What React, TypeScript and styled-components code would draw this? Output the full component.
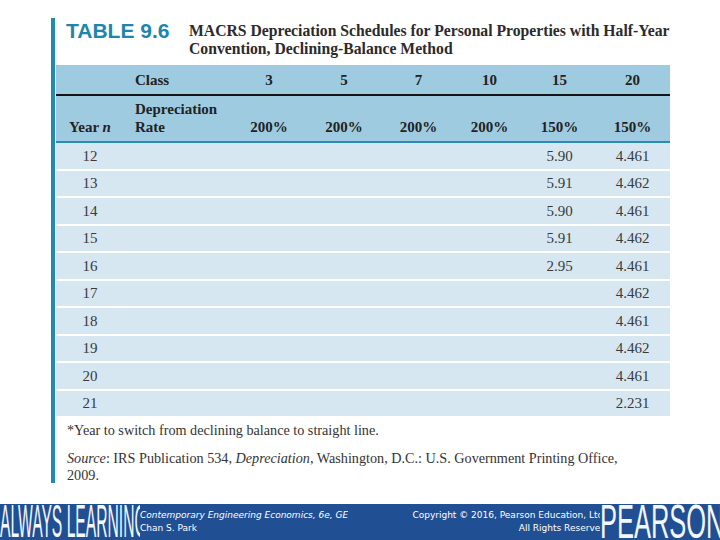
import React from 'react'
import styled, { createGlobalStyle } from 'styled-components'

const GlobalStyle = createGlobalStyle`
  html, body {
    margin: 0;
    padding: 0;
    background: #ffffff;
  }
`

const Page = styled.div`
  width: 720px;
  height: 540px;
  display: flex;
  flex-direction: column;
  overflow: hidden;
  background: #fff;
`

const Slide = styled.div`
  display: flex;
  flex-direction: row;
  padding: 18px 0 0 51px;
`

const Bar = styled.div`
  width: 4px;
  height: 465px;
  background: #2389ae;
  flex-shrink: 0;
  margin-right: 1px;
`

const Content = styled.div`
  width: 614px;
  display: flex;
  flex-direction: column;
`

const TitleRow = styled.div`
  display: flex;
  flex-direction: row;
  height: 47px;
  padding: 3px 0 0 10px;
  box-sizing: border-box;
`

const TableLabel = styled.div`
  font-family: 'Liberation Sans', Arial, sans-serif;
  font-weight: bold;
  font-size: 21px;
  line-height: 20px;
  color: #1c86ad;
  width: 123px;
  flex-shrink: 0;
`

const Caption = styled.div`
  font-family: 'Liberation Serif', 'Times New Roman', serif;
  font-weight: bold;
  font-size: 15.7px;
  line-height: 18px;
  color: #2b2b2b;
  margin-top: 1px;
  white-space: nowrap;
`

const Table = styled.table`
  border-collapse: collapse;
  width: 614px;
  table-layout: fixed;
  font-family: 'Liberation Serif', 'Times New Roman', serif;
  font-size: 15px;
  color: #3a3a3a;
`

const HeadRow = styled.tr<{ $tall?: boolean }>`
  background: #9ecbe0;
  border-bottom: 2px solid ${(p) => (p.$tall ? '#2a8cb4' : '#141414')};
`

const Th = styled.th<{ $left?: boolean }>`
  font-weight: bold;
  color: #222;
  height: 29px;
  padding: 0 0 0 ${(p) => (p.$left ? '11px' : '0')};
  text-align: ${(p) => (p.$left ? 'left' : 'center')};
  vertical-align: middle;
  line-height: 18px;
`

const ThLow = styled(Th)`
  height: 40px;
  vertical-align: bottom;
  padding-bottom: 5px;
`

const BodyRow = styled.tr`
  background: #d6e7f1;
  border-top: 2px solid #ffffff;
  &:first-child {
    border-top: none;
  }
`

const Td = styled.td`
  height: 25.5px;
  text-align: center;
  padding: 0;
  vertical-align: middle;
  line-height: 18px;
`

const Notes = styled.div`
  font-family: 'Liberation Serif', 'Times New Roman', serif;
  font-size: 14.2px;
  color: #333;
  padding: 6px 0 0 11px;
  line-height: 17px;
`

const Note = styled.p<{ $gap?: boolean }>`
  margin: ${(p) => (p.$gap ? '11px' : '0')} 0 0 0;
  max-width: 560px;
`

const Footer = styled.div`
  margin-top: auto;
  height: 36px;
  background: #204f94;
  display: flex;
  flex-direction: row;
  align-items: stretch;
  color: #fff;
  overflow: hidden;
`

const Logo = styled.div<{ $w: number }>`
  width: ${(p) => p.$w}px;
  flex-shrink: 0;
  overflow: hidden;
`

const LogoText = styled.span<{ $size: number; $scale: number }>`
  display: block;
  font-family: 'Liberation Sans', Arial, sans-serif;
  font-size: ${(p) => p.$size}px;
  line-height: ${(p) => p.$size}px;
  white-space: nowrap;
  transform-origin: 0 0;
  transform: scaleX(${(p) => p.$scale});
  margin-top: -6px;
  color: #f4f7fb;
`

const Credits = styled.div<{ $right?: boolean }>`
  flex: ${(p) => (p.$right ? '1' : '0 0 auto')};
  display: flex;
  flex-direction: column;
  justify-content: center;
  font-family: 'DejaVu Sans', Verdana, sans-serif;
  font-size: 9px;
  line-height: 13px;
  text-align: ${(p) => (p.$right ? 'right' : 'left')};
  overflow: hidden;
  white-space: nowrap;
  padding-bottom: 1px;
`

const CreditLine = styled.div<{ $italic?: boolean; $pull?: boolean }>`
  font-style: ${(p) => (p.$italic ? 'italic' : 'normal')};
  margin-right: ${(p) => (p.$pull ? '-6px' : '0')};
`

const years = [
  ['12', '5.90', '4.461'],
  ['13', '5.91', '4.462'],
  ['14', '5.90', '4.461'],
  ['15', '5.91', '4.462'],
  ['16', '2.95', '4.461'],
  ['17', '', '4.462'],
  ['18', '', '4.461'],
  ['19', '', '4.462'],
  ['20', '', '4.461'],
  ['21', '', '2.231'],
]

const widths = [68, 108, 74, 76, 73, 69, 71, 75]

export default function App() {
  return (
    <Page>
      <GlobalStyle />
      <Slide>
        <Bar />
        <Content>
          <TitleRow>
            <TableLabel>TABLE 9.6</TableLabel>
            <Caption>
              MACRS Depreciation Schedules for Personal Properties with Half-Year
              <br />
              Convention, Declining-Balance Method
            </Caption>
          </TitleRow>
          <Table>
            <colgroup>
              {widths.map((w, i) => (
                <col key={i} style={{ width: w }} />
              ))}
            </colgroup>
            <thead>
              <HeadRow>
                <Th />
                <Th $left>Class</Th>
                <Th>3</Th>
                <Th>5</Th>
                <Th>7</Th>
                <Th>10</Th>
                <Th>15</Th>
                <Th>20</Th>
              </HeadRow>
              <HeadRow $tall>
                <ThLow>
                  Year <i>n</i>
                </ThLow>
                <ThLow $left>
                  Depreciation
                  <br />
                  Rate
                </ThLow>
                <ThLow>200%</ThLow>
                <ThLow>200%</ThLow>
                <ThLow>200%</ThLow>
                <ThLow>200%</ThLow>
                <ThLow>150%</ThLow>
                <ThLow>150%</ThLow>
              </HeadRow>
            </thead>
            <tbody>
              {years.map(([y, a, b]) => (
                <BodyRow key={y}>
                  <Td>{y}</Td>
                  <Td />
                  <Td />
                  <Td />
                  <Td />
                  <Td />
                  <Td>{a}</Td>
                  <Td>{b}</Td>
                </BodyRow>
              ))}
            </tbody>
          </Table>
          <Notes>
            <Note>*Year to switch from declining balance to straight line.</Note>
            <Note $gap>
              <i>Source</i>: IRS Publication 534, <i>Depreciation</i>, Washington, D.C.: U.S. Government Printing Office,
              2009.
            </Note>
          </Notes>
        </Content>
      </Slide>
      <Footer>
        <Logo $w={140}>
          <LogoText $size={46} $scale={0.34}>ALWAYS LEARNING</LogoText>
        </Logo>
        <Credits>
          <CreditLine $italic>Contemporary Engineering Economics, 6e, GE</CreditLine>
          <CreditLine>Chan S. Park</CreditLine>
        </Credits>
        <Credits $right>
          <CreditLine $pull>Copyright © 2016, Pearson Education, Ltd.</CreditLine>
          <CreditLine $pull>All Rights Reserved</CreditLine>
        </Credits>
        <Logo $w={120}>
          <LogoText $size={48} $scale={0.53}>PEARSON</LogoText>
        </Logo>
      </Footer>
    </Page>
  )
}
